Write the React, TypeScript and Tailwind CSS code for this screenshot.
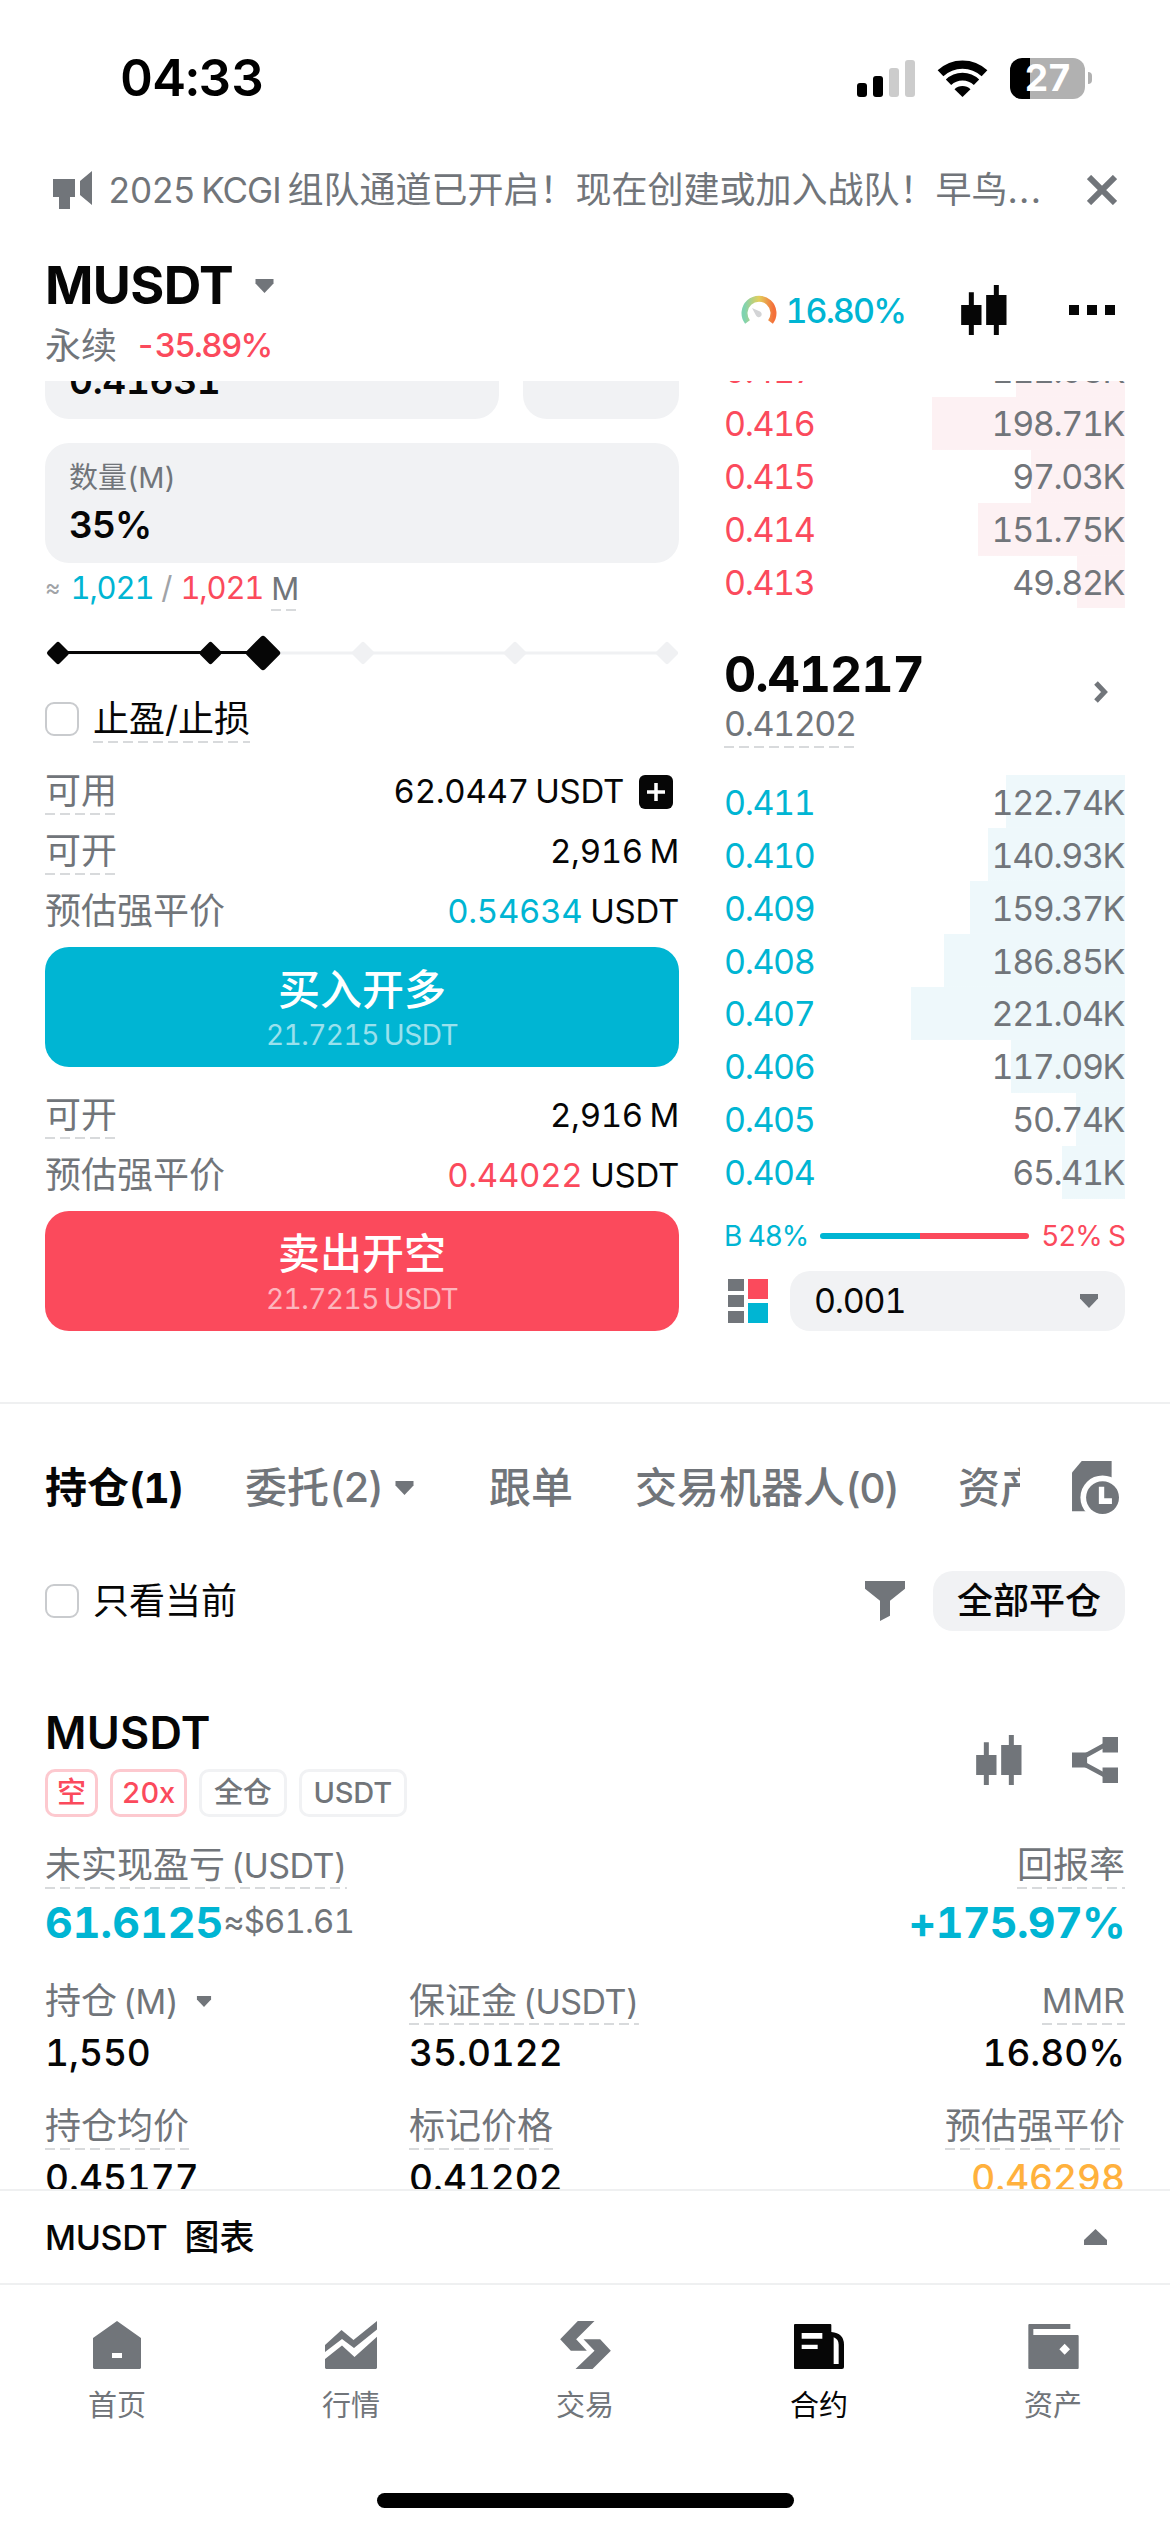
import type {ReactNode} from 'react';
import clsx from 'clsx';

type Level = {price: string; amount: string; depth: number};

const asks: Level[] = [
  {price: '0.417', amount: '111.98K', depth: 109},
  {price: '0.416', amount: '198.71K', depth: 193},
  {price: '0.415', amount: '97.03K', depth: 94},
  {price: '0.414', amount: '151.75K', depth: 147},
  {price: '0.413', amount: '49.82K', depth: 48},
];

const bids: Level[] = [
  {price: '0.411', amount: '122.74K', depth: 119},
  {price: '0.410', amount: '140.93K', depth: 137},
  {price: '0.409', amount: '159.37K', depth: 155},
  {price: '0.408', amount: '186.85K', depth: 181},
  {price: '0.407', amount: '221.04K', depth: 214},
  {price: '0.406', amount: '117.09K', depth: 114},
  {price: '0.405', amount: '50.74K', depth: 49},
  {price: '0.404', amount: '65.41K', depth: 63},
];

// Label with the dashed "tap for help" underline
function Hint({children, className}: {children: ReactNode; className?: string}) {
  return (
    <span
      className={clsx(
        'inline-block h-12 whitespace-nowrap bg-[repeating-linear-gradient(90deg,#d8dadc_0_10px,transparent_10px_15px)] bg-[length:100%_2px] bg-bottom bg-no-repeat leading-[48px]',
        className,
      )}
    >
      {children}
    </span>
  );
}

function Caret({className}: {className?: string}) {
  return (
    <svg viewBox="0 0 18 14" className={className} fill="#71757a">
      <path d="M0 0h18v4.5L9 14 0 4.5z" />
    </svg>
  );
}

function Candles({className}: {className?: string}) {
  return (
    <svg viewBox="0 0 137 150" className={className} fill="currentColor">
      <path d="M23 22h15v38h23v60H38v30H23v-30H0V60h23zM98 0h15v30h23v90h-23v30H98v-30H75V30h23z" />
    </svg>
  );
}

function Checkbox() {
  return <span className="h-[34px] w-[34px] rounded-[9px] border-2 border-[#c9cbce]" />;
}

function StatusBar() {
  return (
    <div className="flex h-[156px] shrink-0 items-center justify-between pl-[120px] pr-[78px]">
      <span className="text-[51px] font-semibold tracking-[-0.3px] text-black">04:33</span>
      <div className="flex items-center">
        <svg className="h-[37px] w-[58px]" viewBox="0 0 58 37">
          <rect x="0" y="23" width="10" height="14" rx="3" />
          <rect x="16" y="16" width="10" height="21" rx="3" />
          <rect x="32" y="8" width="10" height="29" rx="3" fill="#ccc" />
          <rect x="48" y="0" width="10" height="37" rx="3" fill="#ccc" />
        </svg>
        <svg className="ml-[22px] h-[37px] w-[51px]" viewBox="620 57 150 111">
          <path d="M629 97a96 96 0 0 1 132 0" fill="none" stroke="#000" strokeWidth="25" />
          <path d="M653 124a60 60 0 0 1 84 0" fill="none" stroke="#000" strokeWidth="23" />
          <path d="M671 145a34 34 0 0 1 48 0L695 168z" />
        </svg>
        <div className="ml-[22px] flex h-[41px] w-[75px] items-center justify-center rounded-xl bg-[linear-gradient(90deg,#000_20px,#b1b1b1_20px)] text-[37px] font-bold tracking-[-1px] text-white">
          27
        </div>
        <span className="ml-[3px] h-3 w-1 rounded-r-full bg-[#b1b1b1]" />
      </div>
    </div>
  );
}

function Notice() {
  return (
    <div className="flex h-[68px] shrink-0 items-center pl-[53px] pr-[53px] text-[#71757a]">
      <svg className="h-[38px] w-[39px]" viewBox="0 0 39 38" fill="currentColor">
        <path d="M0 8h22v18h-5v12H6V26H0zM27 10l12-10v34L27 24z" />
      </svg>
      <span className="ml-4 flex-1 whitespace-nowrap text-[36px]">
        <span className="text-[35px] tracking-[-1px] [word-spacing:-2px]">2025 KCGI</span>
        <span className="ml-[7px]">组队通道已开启！现在创建或加入战队！早鸟</span>
        <span className="tracking-[2px]">...</span>
      </span>
      <svg className="h-[30px] w-[30px]" viewBox="0 0 30 30" stroke="currentColor" strokeWidth="6">
        <path d="M2 2l26 26M28 2L2 28" />
      </svg>
    </div>
  );
}

function Header() {
  return (
    <div className="flex h-[157px] shrink-0 items-start justify-between pl-[45px] pr-[55px] pt-8">
      <div>
        <div className="flex h-[60px] items-center">
          <h1 className="text-[52px] font-bold tracking-[-0.6px]">MUSDT</h1>
          <Caret className="ml-[22px] h-[14px] w-[19px]" />
        </div>
        <div className="flex h-[60px] items-center">
          <span className="text-[36px] text-[#71757a]">永续</span>
          <span className="ml-[18px] text-[33px] font-medium tracking-[-1.7px] text-[#fb4a5c]">-35.89%</span>
        </div>
      </div>
      <div className="flex h-[108px] items-center">
        <svg className="h-[35px] w-[36px]" viewBox="0 0 36 35">
          <defs>
            <linearGradient id="gauge">
              <stop offset="0" stopColor="#7fd3b0" />
              <stop offset="0.5" stopColor="#e3cf5c" />
              <stop offset="1" stopColor="#f4703a" />
            </linearGradient>
          </defs>
          <path d="M6.500 29a14.500 14.500 0 1 1 23 0" fill="none" stroke="url(#gauge)" strokeWidth="6" />
          <path d="M11 15l8 3.500a3 3 0 1 1-4 4z" fill="#d3d4d6" />
        </svg>
        <span className="ml-2 text-[34px] font-medium tracking-[-1.9px] text-[#00b5d3]">16.80%</span>
        <Candles className="ml-[56px] h-[50px] w-[46px] text-[#060606]" />
        <div className="ml-[62px] flex gap-2">
          <span className="h-2.5 w-2.5 bg-[#060606]" />
          <span className="h-2.5 w-2.5 bg-[#060606]" />
          <span className="h-2.5 w-2.5 bg-[#060606]" />
        </div>
      </div>
    </div>
  );
}

function Slider() {
  return (
    <svg className="h-20 w-full" viewBox="0 0 634 80">
      <path d="M13 40H622" stroke="#f0f1f3" strokeWidth="3" />
      <path d="M13 39.500H218" stroke="#060606" strokeWidth="3" />
      {[318, 470, 622].map((x) => (
        <rect key={x} x={x - 8.5} y="31.500" width="17" height="17" rx="2.500" fill="#f0f1f3" transform={`rotate(45 ${x} 40)`} />
      ))}
      {[13, 165.5].map((x) => (
        <rect key={x} x={x - 8.5} y="31.500" width="17" height="17" rx="2.500" fill="#060606" transform={`rotate(45 ${x} 40)`} />
      ))}
      <rect x="205" y="27" width="26" height="26" rx="3" fill="#060606" transform="rotate(45 218 40)" />
    </svg>
  );
}

function InfoRow({label, hint, children}: {label: string; hint?: boolean; children: ReactNode}) {
  return (
    <div className="flex h-[60px] items-center justify-between text-[36px]">
      {hint ? <Hint className="text-[#71757a]">{label}</Hint> : <span className="text-[#71757a]">{label}</span>}
      <span className="mt-0.5 flex items-center text-[33px] tracking-[-0.3px] [word-spacing:-2px]">{children}</span>
    </div>
  );
}

function OrderButton({label, className}: {label: string; className: string}) {
  return (
    <button
      type="button"
      className={clsx('mt-1.5 flex h-[120px] flex-col items-center rounded-3xl pt-[18px] text-white', className)}
    >
      <span className="text-[42px] font-medium leading-[50px]">{label}</span>
      <span className="text-[28px] leading-10 tracking-[-0.5px] opacity-60 [word-spacing:-2px]">21.7215 USDT</span>
    </button>
  );
}

function OrderForm() {
  return (
    <div className="flex w-[634px] flex-col">
      <div className="-mt-[82px] flex gap-6">
        <div className="h-[120px] w-[454px] rounded-3xl bg-[#f1f2f4] px-6 pt-[15px]">
          <div className="h-[42px]" />
          <div className="text-[37px] font-semibold leading-[50px] tracking-[-0.3px]">0.41631</div>
        </div>
        <div className="h-[120px] flex-1 rounded-3xl bg-[#f1f2f4]" />
      </div>
      <div className="mt-6 h-[120px] rounded-3xl bg-[#f1f2f4] px-6 pt-[14px]">
        <div className="text-[29px] leading-[42px] text-[#71757a]">数量(M)</div>
        <div className="mt-px text-[37px] font-semibold leading-[50px] tracking-[-1px]">35%</div>
      </div>
      <div className="flex h-[50px] items-center text-[31px] text-[#a0a3a7]">
        <span className="text-[24px]">≈</span>
        <span className="ml-2.5 tracking-[-1.2px] text-[#00b5d3]">1,021</span>
        <span className="mx-2">/</span>
        <span className="tracking-[-1.2px] text-[#fb4a5c]">1,021</span>
        <Hint className="ml-2 h-[46px] text-[#71757a]">M</Hint>
      </div>
      <Slider />
      <div className="mb-4 flex h-[52px] items-center">
        <Checkbox />
        <Hint className="ml-3.5 text-[36px]">止盈/止损</Hint>
      </div>
      <InfoRow label="可用" hint>
        62.0447 USDT
        <svg className="ml-[15px] mr-[6px] h-[34px] w-[34px]" viewBox="0 0 34 34">
          <rect width="34" height="34" rx="6" fill="#060606" />
          <path d="M17 8v18M8 17h18" stroke="#fff" strokeWidth="3.500" />
        </svg>
      </InfoRow>
      <InfoRow label="可开" hint>
        2,916 M
      </InfoRow>
      <InfoRow label="预估强平价">
        <span className="mr-2 text-[#00b5d3]">0.54634</span>USDT
      </InfoRow>
      <OrderButton label="买入开多" className="bg-[#00b5d3]" />
      <div className="h-[18px]" />
      <InfoRow label="可开" hint>
        2,916 M
      </InfoRow>
      <InfoRow label="预估强平价">
        <span className="mr-2 text-[#fb4a5c]">0.44022</span>USDT
      </InfoRow>
      <OrderButton label="卖出开空" className="bg-[#fb4a5c]" />
    </div>
  );
}

function BookRow({level, side}: {level: Level; side: 'ask' | 'bid'}) {
  return (
    <div
      className={clsx(
        'flex h-[52.9px] items-center justify-between bg-right bg-no-repeat pr-px pt-px text-[34px] tracking-[-1.4px]',
        side === 'ask'
          ? 'bg-[linear-gradient(#fdf1f3,#fdf1f3)]'
          : 'bg-[linear-gradient(#eef8fb,#eef8fb)]',
      )}
      style={{backgroundSize: `${level.depth}px 100%`}}
    >
      <span className={side === 'ask' ? 'text-[#fb4a5c]' : 'text-[#00b5d3]'}>{level.price}</span>
      <span className="text-[#71757a]">{level.amount}</span>
    </div>
  );
}

function OrderBook() {
  return (
    <div className="-mt-[37px] flex w-[401px] flex-col">
      {asks.map((level) => (
        <BookRow key={level.price} level={level} side="ask" />
      ))}
      <div className="flex h-[167px] items-center justify-between pr-[17px]">
        <div className="flex flex-col items-start pt-2">
          <span className="text-[50px] font-bold leading-[60px] tracking-[-1.1px]">0.41217</span>
          <Hint className="-mt-1 text-[34px] tracking-[-1.4px] text-[#71757a]">0.41202</Hint>
        </div>
        <svg className="h-[22px] w-[14px]" viewBox="0 0 14 22" fill="none" stroke="#71757a" strokeWidth="5">
          <path d="M2 2l8.500 9L2 20" />
        </svg>
      </div>
      {bids.map((level) => (
        <BookRow key={level.price} level={level} side="bid" />
      ))}
      <div className="mt-[7px] flex h-[60px] items-center justify-between text-[28px] tracking-[-1.1px]">
        <span className="text-[#00b5d3]">B 48%</span>
        <div className="flex h-1.5 w-[209px] overflow-hidden rounded-full">
          <span className="w-[48%] bg-[#00b5d3]" />
          <span className="flex-1 bg-[#fb4a5c]" />
        </div>
        <span className="text-[#fb4a5c]">52% S</span>
      </div>
      <div className="mt-[5px] flex h-[60px] items-center">
        <svg className="ml-1 h-11 w-10" viewBox="0 0 40 44" fill="#71757a">
          <path d="M0 0h16v12H0zM0 16h16v12H0zM0 32h16v12H0z" />
          <path d="M20 0h20v20H20z" fill="#fb4a5c" />
          <path d="M20 24h20v20H20z" fill="#00b5d3" />
        </svg>
        <div className="ml-[22px] flex h-[60px] flex-1 items-center justify-between rounded-[20px] bg-[#f1f2f4] pl-6 pr-[27px] text-[34px] tracking-[-1.2px]">
          0.001
          <Caret className="h-[14px] w-[18px]" />
        </div>
      </div>
    </div>
  );
}

function Count({value}: {value: number}) {
  return <span className="text-[41px] tracking-[-1.8px]">({value})</span>;
}

function Tabs() {
  return (
    <div className="flex h-[167px] items-center justify-between pr-[51px] text-[42px] font-medium text-[#71757a]">
      <div className="flex w-[975px] items-center overflow-hidden whitespace-nowrap">
        <span className="w-[200px] shrink-0 font-bold text-[#060606]">
          持仓
          <Count value={1} />
        </span>
        <span className="flex w-[244px] shrink-0 items-center">
          委托
          <Count value={2} />
          <Caret className="ml-[13px] h-[14px] w-[19px]" />
        </span>
        <span className="w-[146px] shrink-0">跟单</span>
        <span className="w-[323px] shrink-0">
          交易机器人
          <Count value={0} />
        </span>
        <span className="shrink-0">资产</span>
      </div>
      <svg className="h-[53px] w-[47px]" viewBox="665 66 140 158" fill="#71757a">
        <path d="M694 66h89v150H665V100z" />
        <circle cx="756" cy="175" r="66" fill="#fff" />
        <circle cx="756" cy="175" r="49" />
        <path d="M745 143h16v34h23v17h-39z" fill="#fff" />
      </svg>
    </div>
  );
}

function Tag({children, red}: {children: ReactNode; red?: boolean}) {
  return (
    <span
      className={clsx(
        'flex h-12 items-center rounded-[10px] border-[3px] text-[29px] font-medium tracking-[-0.2px]',
        red ? 'border-[#fdc9cf] px-[9px] text-[#fb4a5c]' : 'border-[#f1f2f4] px-3 text-[#71757a]',
      )}
    >
      {children}
    </span>
  );
}

function Unit({children}: {children: ReactNode}) {
  return <span className="-ml-1 text-[34px] tracking-[-0.5px]">{children}</span>;
}

function Value({children, className}: {children: ReactNode; className?: string}) {
  return (
    <span className={clsx('mt-1 h-12 text-[37px] font-medium leading-[48px]', className)}>
      {children}
    </span>
  );
}

function PositionCard() {
  return (
    <div className="pr-[45px] pt-[72px] text-[36px]">
      <div className="flex items-center justify-between pr-[7px]">
        <div>
          <h2 className="text-[45px] font-semibold leading-[60px] tracking-[0.2px]">MUSDT</h2>
          <div className="mt-1.5 flex gap-3">
            <Tag red>空</Tag>
            <Tag red>20x</Tag>
            <Tag>全仓</Tag>
            <Tag>USDT</Tag>
          </div>
        </div>
        <div className="flex gap-[50px] text-[#71757a]">
          <Candles className="h-[50px] w-[46px]" />
          <svg className="mt-0.5 h-[46px] w-[46px]" viewBox="667 891 137 137" fill="currentColor">
            <path d="M667 937h45v45h-45zM758 891h46v46h-46zM758 982h46v46h-46z" />
            <path d="M770 912l-70 38v20l70 38" fill="none" stroke="currentColor" strokeWidth="14" />
          </svg>
        </div>
      </div>

      <div className="mt-6 flex justify-between text-[#71757a]">
        <Hint>
          未实现盈亏 <Unit>(USDT)</Unit>
        </Hint>
        <Hint>回报率</Hint>
      </div>
      <div className="mt-1 flex h-[58px] items-center justify-between text-[43px] font-bold text-[#00b5d3]">
        <span className="flex items-center">
          61.6125
          <span className="text-[33px] font-normal tracking-[-0.9px] text-[#71757a]">≈$61.61</span>
        </span>
        <span className="tracking-[-0.7px]">+175.97%</span>
      </div>

      <div className="mt-[26px] grid grid-cols-[364px_1fr_auto] text-[#71757a]">
        <div className="flex h-12 items-center">
          <span>
            持仓 <Unit>(M)</Unit>
          </span>
          <Caret className="ml-[18px] h-[11px] w-4" />
        </div>
        <div className="flex">
          <Hint>
            保证金 <Unit>(USDT)</Unit>
          </Hint>
        </div>
        <div className="flex justify-end">
          <Hint className="text-[34px]">MMR</Hint>
        </div>
        <Value className="text-[#060606]">1,550</Value>
        <Value className="text-[#060606]">35.0122</Value>
        <Value className="text-right text-[#060606]">16.80%</Value>
        <div className="mt-[25px] flex">
          <Hint>持仓均价</Hint>
        </div>
        <div className="mt-[25px] flex">
          <Hint>标记价格</Hint>
        </div>
        <div className="mt-[25px] flex">
          <Hint>预估强平价</Hint>
        </div>
        <Value className="text-[#060606]">0.45177</Value>
        <Value className="text-[#060606]">0.41202</Value>
        <Value className="text-right text-[#ffb13d]">0.46298</Value>
      </div>
    </div>
  );
}

function Positions() {
  return (
    <div className="h-[787px] shrink-0 overflow-hidden border-t-2 border-[#eff0f1] pl-[45px]">
      <Tabs />
      <div className="flex h-[60px] items-center pr-[45px] text-[36px]">
        <Checkbox />
        <span className="ml-3.5 flex-1">只看当前</span>
        <svg className="mr-7 h-10 w-10" viewBox="0 0 40 40" fill="#71757a">
          <path d="M0 0h40v7.700L25 19.700v15L15 40V19.700L0 7.700z" />
        </svg>
        <button type="button" className="h-[60px] w-[192px] rounded-[20px] bg-[#f1f2f4] font-medium">
          全部平仓
        </button>
      </div>
      <PositionCard />
    </div>
  );
}

const navItems = [
  {
    label: '首页',
    icon: (
      <svg className="h-12 w-12" viewBox="0 0 48 48" fill="currentColor" fillRule="evenodd">
        <path d="M24 0l24 17v30l-1 1H1l-1-1V17zM19 32v5h10v-5z" />
      </svg>
    ),
  },
  {
    label: '行情',
    icon: (
      <svg className="h-12 w-[52px]" viewBox="0 0 52 48" fill="currentColor">
        <path d="M0 24L16.500 9l12 10L52 0v8.500L29 27 17 18 0 31z" />
        <path d="M0 38l17-13.500L29.500 36 52 15.700V47l-1 1H1l-1-1z" />
      </svg>
    ),
  },
  {
    label: '交易',
    icon: (
      <svg className="h-12 w-[51px]" viewBox="0 63 152 144" fill="currentColor">
        <path d="M53 63h50l-55 55 32 34H32L0 118z" />
        <path d="M70 118h50l32 34-55 55H46l57-55z" />
      </svg>
    ),
  },
  {
    label: '合约',
    active: true,
    icon: (
      <svg className="h-12 w-[50px]" viewBox="706 63 150 144" fill="currentColor" fillRule="evenodd">
        <path d="M709 72h106q3 0 3 3v21q38 3 38 38v67q0 6-6 6H709q-3 0-3-3V75q0-3 3-3zM729 99v17h62V99zM729 134v13h48v-13zM825 112v80h15v-58q0-16-15-22z" />
      </svg>
    ),
  },
  {
    label: '资产',
    icon: (
      <svg className="h-12 w-[51px]" viewBox="1404 63 151 144" fill="currentColor" fillRule="evenodd">
        <path d="M1407 72h123v15h-111v18h133q3 0 3 3v96q0 3-3 3h-145q-3 0-3-3V75q0-3 3-3zM1513 131l-16 17 16 16 16-16z" />
      </svg>
    ),
  },
];

function BottomNav() {
  return (
    <nav className="flex shrink-0 border-t-2 border-[#eff0f1] pt-9">
      {navItems.map((item) => (
        <div
          key={item.label}
          className={clsx(
            'flex flex-1 flex-col items-center text-[29px]',
            item.active ? 'text-[#060606]' : 'text-[#71757a]',
          )}
        >
          {item.icon}
          <span className="mt-4 leading-[42px]">{item.label}</span>
        </div>
      ))}
    </nav>
  );
}

export default function App() {
  return (
    <div className="flex h-[2532px] w-[1170px] flex-col overflow-hidden bg-white font-['Inter','Noto_Sans_CJK_SC',sans-serif] tabular-nums text-[#060606]">
      <StatusBar />
      <Notice />
      <Header />
      <div className="flex h-[1021px] shrink-0 justify-between overflow-hidden px-[45px]">
        <OrderForm />
        <OrderBook />
      </div>
      <Positions />
      <div className="flex h-[94px] shrink-0 items-center justify-between border-t-2 border-[#eff0f1] pl-[45px] pr-[63px] text-[35px] font-medium">
        <span>
          <span className="mr-[17px] text-[34px] tracking-[-0.3px]">MUSDT</span>图表
        </span>
        <svg className="h-4 w-[23px]" viewBox="0 0 23 16" fill="#71757a">
          <path d="M11.500 0L23 11v5H0v-5z" />
        </svg>
      </div>
      <BottomNav />
      <div className="mx-auto mb-6 mt-auto h-[15px] w-[417px] shrink-0 rounded-full bg-black" />
    </div>
  );
}
